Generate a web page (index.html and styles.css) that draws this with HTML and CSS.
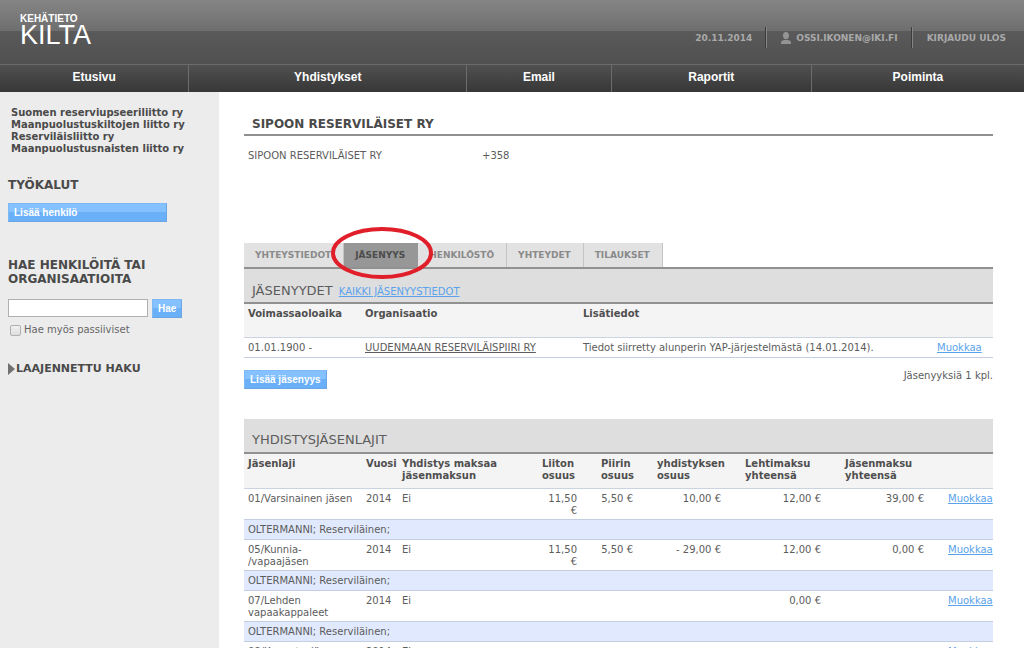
FILE: index.html
```html
<!DOCTYPE html>
<html lang="fi">
<head>
<meta charset="utf-8">
<title>Kehätieto Kilta</title>
<link rel="stylesheet" href="styles.css">
</head>
<body>
<header class="header">
  <a class="logo" href="#"><span class="logo-top">KEHÄTIETO</span><span class="logo-name">KILTA</span></a>
  <div class="user-bar">
    <span class="user-item">20.11.2014</span>
    <a class="user-item" href="#"><svg class="user-icon" viewBox="0 0 10 12" aria-hidden="true"><ellipse cx="5" cy="3.6" rx="3" ry="3.6"/><path d="M0 12V10.200Q0 8.600 3.200 8H6.800Q10 8.600 10 10.200V12Z"/></svg>OSSI.IKONEN@IKI.FI</a>
    <a class="user-item" href="#">KIRJAUDU ULOS</a>
  </div>
</header>
<nav class="nav">
  <a class="nav-link nav-home" href="#">Etusivu</a>
  <a class="nav-link nav-orgs" href="#">Yhdistykset</a>
  <a class="nav-link nav-email" href="#">Email</a>
  <a class="nav-link nav-reports" href="#">Raportit</a>
  <a class="nav-link nav-pick" href="#">Poiminta</a>
</nav>
<div class="page">
  <aside class="sidebar">
    <ul class="orgs">
      <li><a href="#">Suomen reserviupseeriliitto ry</a></li>
      <li><a href="#">Maanpuolustuskiltojen liitto ry</a></li>
      <li><a href="#">Reserviläisliitto ry</a></li>
      <li><a href="#">Maanpuolustusnaisten liitto ry</a></li>
    </ul>
    <h2 class="side-title">TYÖKALUT</h2>
    <button class="button button-wide" type="button">Lisää henkilö</button>
    <form class="search">
      <h2 class="side-title"><label for="q">HAE HENKILÖITÄ TAI ORGANISAATIOITA</label></h2>
      <div class="search-row">
        <input class="search-input" id="q" type="text">
        <button class="button" type="button">Hae</button>
      </div>
      <label class="check"><input class="check-box" type="checkbox">Hae myös passiiviset</label>
    </form>
    <a class="advanced" href="#"><svg class="advanced-icon" viewBox="0 0 7 12" aria-hidden="true"><path d="M0 0L7 6L0 12Z"/></svg>LAAJENNETTU HAKU</a>
  </aside>
  <main class="main">
    <h1 class="title">SIPOON RESERVILÄISET RY</h1>
    <div class="contact"><span>SIPOON RESERVILÄISET RY</span><span>+358</span></div>
    <ul class="tabs">
      <li class="tab"><a href="#">YHTEYSTIEDOT</a></li>
      <li class="tab tab-active"><a href="#">JÄSENYYS</a><svg class="mark" viewBox="0 0 104 54" aria-hidden="true"><ellipse cx="52" cy="27" rx="49" ry="24"/></svg></li>
      <li class="tab"><a href="#">HENKILÖSTÖ</a></li>
      <li class="tab"><a href="#">YHTEYDET</a></li>
      <li class="tab"><a href="#">TILAUKSET</a></li>
    </ul>
    <section>
      <div class="section-head section-head-first"><h2 class="section-title">JÄSENYYDET</h2><a class="link" href="#">KAIKKI JÄSENYYSTIEDOT</a></div>
      <table class="table members">
        <colgroup><col class="m-time"><col class="m-org"><col class="m-info"><col class="m-edit"></colgroup>
        <thead><tr><th>Voimassaoloaika</th><th>Organisaatio</th><th>Lisätiedot</th><th></th></tr></thead>
        <tbody><tr><td>01.01.1900 -</td><td><a class="org-link" href="#">UUDENMAAN RESERVILÄISPIIRI RY</a></td><td>Tiedot siirretty alunperin YAP-järjestelmästä (14.01.2014).</td><td><a class="link" href="#">Muokkaa</a></td></tr></tbody>
      </table>
      <div class="table-foot"><button class="button" type="button">Lisää jäsenyys</button><span>Jäsenyyksiä 1 kpl.</span></div>
    </section>
    <section>
      <div class="section-head"><h2 class="section-title">YHDISTYSJÄSENLAJIT</h2></div>
      <table class="table kinds">
        <colgroup><col class="k-kind"><col class="k-year"><col><col class="k-union"><col class="k-district"><col class="k-assoc"><col class="k-mag"><col class="k-total"><col class="k-edit"></colgroup>
        <thead><tr><th>Jäsenlaji</th><th>Vuosi</th><th>Yhdistys maksaa<br>jäsenmaksun</th><th>Liiton<br>osuus</th><th>Piirin<br>osuus</th><th>yhdistyksen<br>osuus</th><th>Lehtimaksu<br>yhteensä</th><th>Jäsenmaksu<br>yhteensä</th><th></th></tr></thead>
        <tbody>
          <tr><td>01/Varsinainen jäsen</td><td>2014</td><td>Ei</td><td class="num">11,50<br>€</td><td class="num">5,50 €</td><td class="num">10,00 €</td><td class="num">12,00 €</td><td class="num">39,00 €</td><td class="edit"><a class="link" href="#">Muokkaa</a></td></tr>
          <tr class="note"><td colspan="9">OLTERMANNI; Reserviläinen;</td></tr>
          <tr><td>05/Kunnia-<br>/vapaajäsen</td><td>2014</td><td>Ei</td><td class="num">11,50<br>€</td><td class="num">5,50 €</td><td class="num">- 29,00 €</td><td class="num">12,00 €</td><td class="num">0,00 €</td><td class="edit"><a class="link" href="#">Muokkaa</a></td></tr>
          <tr class="note"><td colspan="9">OLTERMANNI; Reserviläinen;</td></tr>
          <tr><td>07/Lehden<br>vapaakappaleet</td><td>2014</td><td>Ei</td><td></td><td></td><td></td><td class="num">0,00 €</td><td></td><td class="edit"><a class="link" href="#">Muokkaa</a></td></tr>
          <tr class="note"><td colspan="9">OLTERMANNI; Reserviläinen;</td></tr>
          <tr><td>08/Kannatusjäsen</td><td>2014</td><td>Ei</td><td></td><td></td><td></td><td></td><td></td><td class="edit"><a class="link" href="#">Muokkaa</a></td></tr>
        </tbody>
      </table>
    </section>
  </main>
</div>
</body>
</html>
```
FILE: styles.css
```css
* { box-sizing: border-box; }
body {
  margin: 0;
  background: #fff;
  color: #5c5c5c;
  font: 10px/12px "DejaVu Sans", Verdana, sans-serif;
}
h1, h2, ul { margin: 0; padding: 0; }
ul { list-style: none; }
a { color: inherit; text-decoration: none; }

.header {
  display: flex;
  justify-content: space-between;
  height: 64px;
  padding: 0 18px 0 20px;
  background: linear-gradient(#858585, #6e6e6e 31px, #5a5a5a 31px, #505050);
}
.logo {
  display: flex;
  flex-direction: column;
  padding-top: 13px;
  color: #fff;
  font-family: "Liberation Sans", Arial, sans-serif;
}
.logo-top { font-size: 10px; line-height: 11px; font-weight: bold; }
.logo-name { font-size: 27px; line-height: 22px; }
.user-bar {
  display: flex;
  align-items: flex-start;
  padding-top: 27px;
  color: #a9a9a9;
  font-size: 9px;
  font-weight: bold;
}
.user-item { display: flex; align-items: center; gap: 5px; height: 21px; padding: 0 14px; border-left: 1px solid #858585; box-shadow: -1px 0 #3c3c3c; }
.user-item:first-child { border: 0; box-shadow: none; }
.user-item:last-child { padding-right: 0; }
.user-icon { width: 10px; height: 12px; fill: #949494; }

.nav {
  display: flex;
  height: 28px;
  border-top: 1px solid #6a6a6a;
  background: linear-gradient(#505050, #373737);
}
.nav-link {
  border-left: 1px solid #6c6c6c;
  color: #fff;
  font: bold 12px/25px "Liberation Sans", Arial, sans-serif;
  text-align: center;
}
.nav-link:first-child { border-left: 0; }
.nav-home { flex: 189; }
.nav-orgs { flex: 278; }
.nav-email { flex: 144; }
.nav-reports { flex: 200; }
.nav-pick { flex: 213; }

.page { display: flex; min-height: calc(100vh - 92px); }
.sidebar { flex: none; width: 219px; padding: 15px 8px; background: #ececec; color: #4a4a4a; }
.orgs { padding: 0 3px; font-weight: bold; margin-bottom: 23px; }
.side-title { font-size: 12px; line-height: 14px; }
.button {
  height: 19px;
  padding: 0 5px;
  border: 1px solid #7fb9f5;
  border-right-color: #6aa6e4;
  border-bottom-color: #6aa6e4;
  background: linear-gradient(#86c1ff 50%, #69b0f9 50%);
  color: #fff;
  font: bold 10px/16px "Liberation Sans", Arial, sans-serif;
  white-space: nowrap;
}
.button-wide { display: block; width: 159px; margin: 11px 0 36px; text-align: left; }
.search-row { display: flex; gap: 4px; margin: 13px 0 6px; }
.search-input { width: 140px; height: 18px; border: 1px solid #b0b0b0; background: #fff; font: inherit; }
.check { display: flex; align-items: center; gap: 3px; padding-left: 2px; color: #666; }
.check-box { appearance: none; width: 11px; height: 11px; margin: 0; border: 1px solid #b0b0b0; border-radius: 2px; background: linear-gradient(#f0f0f0, #dedede); }
.advanced { display: flex; align-items: center; gap: 1px; margin-top: 27px; font-size: 11px; font-weight: bold; }
.advanced-icon { width: 7px; height: 12px; fill: #707070; }

.main { flex: 1; min-width: 0; padding: 25px 31px 0 25px; }
.title { padding: 0 8px 3px; border-bottom: 2px solid #8f8f8f; color: #4a4a4a; font-size: 12px; line-height: 14px; }
.contact { display: grid; grid-template-columns: 234px 1fr; height: 107px; padding: 14px 4px 0; }
.tabs { display: flex; border-bottom: 2px solid #919191; }
.tab { position: relative; padding: 6px 12px 6px 11px; border-right: 1px solid #c4c4c4; background: #e2e2e2; color: #8a8a8a; font-size: 9px; font-weight: bold; }
.tab-active { background: #979797; color: #4c4c4c; border-right-color: #979797; }
.mark { position: absolute; z-index: 1; left: -14px; top: -17px; width: 104px; height: 54px; fill: none; stroke: #e01f2a; stroke-width: 4; }

.section-head { display: flex; align-items: baseline; gap: 6px; padding: 13px 8px 4px; border-bottom: 2px solid #919191; background: #dedede; }
.section-head-first { padding-top: 14px; padding-bottom: 3px; }
.section-title { font-size: 13px; line-height: 16px; font-weight: normal; }
.link { color: #5aa2ec; text-decoration: underline; }
.org-link { text-decoration: underline; }
.table { width: 100%; table-layout: fixed; border-spacing: 0; }
.table th { height: 34px; padding: 4px 4px 5px; border-bottom: 1px solid #c9d4e0; background: #f5f4f4; color: #4f4f4f; text-align: left; vertical-align: top; white-space: nowrap; }
.table td { padding: 4px 4px 2px; border-bottom: 1px solid #c3cee0; vertical-align: top; white-space: nowrap; }
.members td { padding-bottom: 3px; }
.kinds th { height: 35px; }
.m-time { width: 117px; }
.m-org { width: 218px; }
.m-edit { width: 60px; }
.table-foot { display: flex; justify-content: space-between; align-items: flex-start; margin: 12px 0 30px; }
.k-kind { width: 118px; }
.k-year { width: 36px; }
.k-union { width: 59px; }
.k-district { width: 56px; }
.k-assoc { width: 88px; }
.k-mag { width: 100px; }
.k-total { width: 103px; }
.k-edit { width: 49px; }
.table .num { padding-right: 20px; text-align: right; }
.table .edit { padding-right: 1px; text-align: right; }
.table .note td { padding-bottom: 3px; background: #e0e9fd; }
```
